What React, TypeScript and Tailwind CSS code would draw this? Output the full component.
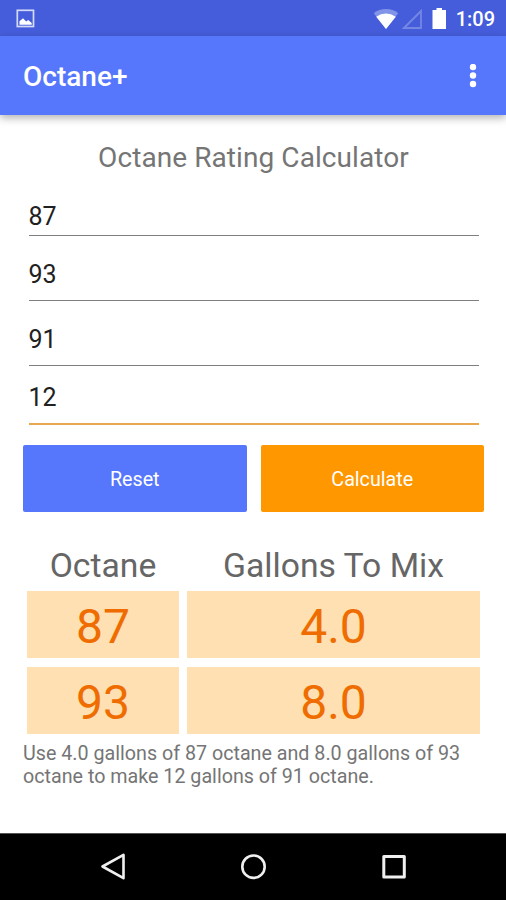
import React from 'react';

const fields = [
  { value: '87', className: 'h-[46px] pb-[3px] border-b border-[#7f7f7f]' },
  { value: '93', className: 'h-[65px] pb-[10px] border-b border-[#7f7f7f]' },
  { value: '91', className: 'h-[65px] pb-[10px] border-b border-[#7f7f7f]' },
  { value: '12', className: 'h-[59px] pb-[10px] border-b-2 border-[#e9a84f]' },
];

const results = [
  { octane: '87', gallons: '4.0' },
  { octane: '93', gallons: '8.0' },
];

const StatusBar: React.FC = () => (
  <div className="h-9 shrink-0 bg-[#455ddb] flex items-center justify-between pl-4 pr-[11px] text-white">
    <svg className="w-[19px] h-[19px]" viewBox="0 0 19 19">
      <rect x="1.300" y="1.300" width="16.200" height="16.200" fill="none" stroke="#d3daf8" strokeWidth="1.700" />
      <path d="M3.500 15.800v-3.600l3.500-3 3.200 3.200 2-1.400 3.500 3v1.800z" fill="#fff" />
    </svg>
    <div className="flex items-center pt-px">
      <svg className="w-[74px] h-[24px] mr-[9px]" viewBox="0 0 74 24">
        {/* Wifi */}
        <path d="M13 22L.8 6.200Q6 2 13 2T25.200 6.200z" fill="#8294e8" />
        <path d="M13 22L3.200 9.800Q8 6.500 13 6.500T22.800 9.800z" fill="#fff" />
        {/* Signal */}
        <path d="M31 21L48 4v17z" fill="none" stroke="#7587e5" strokeWidth="1.800" />
        {/* Battery */}
        <path d="M63.500 1h5.500v2h4v19H59.500V3h4z" fill="#fff" />
      </svg>
      <span className="text-[20px] leading-6 font-medium">1:09</span>
    </div>
  </div>
);

const AppBar: React.FC = () => (
  <header className="relative h-[79px] shrink-0 bg-[#5677fc] flex items-center justify-between pl-[23px] pr-[29px] text-white shadow-[0_3px_8px_rgba(0,0,0,0.3)]">
    <h1 className="pt-[2px] text-[28px] leading-8 font-medium">Octane+</h1>
    <svg className="w-2 h-6" viewBox="0 0 8 24" fill="#fff">
      <circle cx="4" cy="3" r="3.200" />
      <circle cx="4" cy="11.500" r="3.200" />
      <circle cx="4" cy="20" r="3.200" />
    </svg>
  </header>
);

const NavBar: React.FC = () => (
  <nav className="h-[67px] shrink-0 bg-black border-t border-[#555] flex items-center justify-between px-[100px]">
    <svg className="w-7 h-7" viewBox="0 0 28 28" fill="none" stroke="#f0f0f0" strokeWidth="2.600" strokeLinejoin="round">
      <path d="M2.500 13.500L23.500 1.800v23.400z" />
    </svg>
    <svg className="w-7 h-7" viewBox="0 0 28 28" fill="none" stroke="#f0f0f0" strokeWidth="2.600">
      <circle cx="14.500" cy="13.700" r="11.200" />
    </svg>
    <svg className="w-7 h-7" viewBox="0 0 28 28" fill="none" stroke="#f0f0f0" strokeWidth="3" strokeLinejoin="round">
      <rect x="5.800" y="3.500" width="20.500" height="20.500" />
    </svg>
  </nav>
);

const App: React.FC = () => {
  return (
    <div className="w-[506px] h-[900px] flex flex-col overflow-hidden bg-white font-['Roboto',sans-serif]">
      <StatusBar />
      <AppBar />

      <main className="flex-1 pl-[23px] pr-[22px] pt-[27px]">
        <h2 className="text-center text-[28px] leading-8 tracking-[0.08px] text-[#757575]">Octane Rating Calculator</h2>

        <div className="mt-4 ml-[5.5px] mr-[5.5px]">
          {fields.map((field) => (
            <div key={field.value} className={`flex items-end text-[25px] leading-[30px] text-[#212121] ${field.className}`}>
              {field.value}
            </div>
          ))}
        </div>

        <div className="mt-5 grid grid-cols-2 gap-[14px] text-[19.7px] text-white">
          <button className="h-[67px] pt-[3px] rounded-[2px] bg-[#5677fc]">Reset</button>
          <button className="h-[67px] pt-[3px] rounded-[2px] bg-[#ff9800]">Calculate</button>
        </div>

        <div className="mt-[33px] mx-1 grid grid-cols-[152px_293px] gap-x-2 text-center">
          <div className="h-[46px] pt-px text-[33.7px] leading-10 text-[#666]">Octane</div>
          <div className="h-[46px] pt-px text-[33.7px] leading-10 text-[#666]">Gallons To Mix</div>
          {results.map((row) => (
            <React.Fragment key={row.octane}>
              <div className="h-[67px] mb-[9px] bg-[#ffe0b2] text-[48px] leading-[72px] text-[#ef6c00]">{row.octane}</div>
              <div className="h-[67px] mb-[9px] bg-[#ffe0b2] text-[48px] leading-[72px] text-[#ef6c00]">{row.gallons}</div>
            </React.Fragment>
          ))}
        </div>

        <p className="-mt-px text-[19.7px] leading-[23px] text-[#757575]">
          Use 4.0 gallons of 87 octane and 8.0 gallons of 93<br />
          octane to make 12 gallons of 91 octane.
        </p>
      </main>

      <NavBar />
    </div>
  );
};

export default App;
